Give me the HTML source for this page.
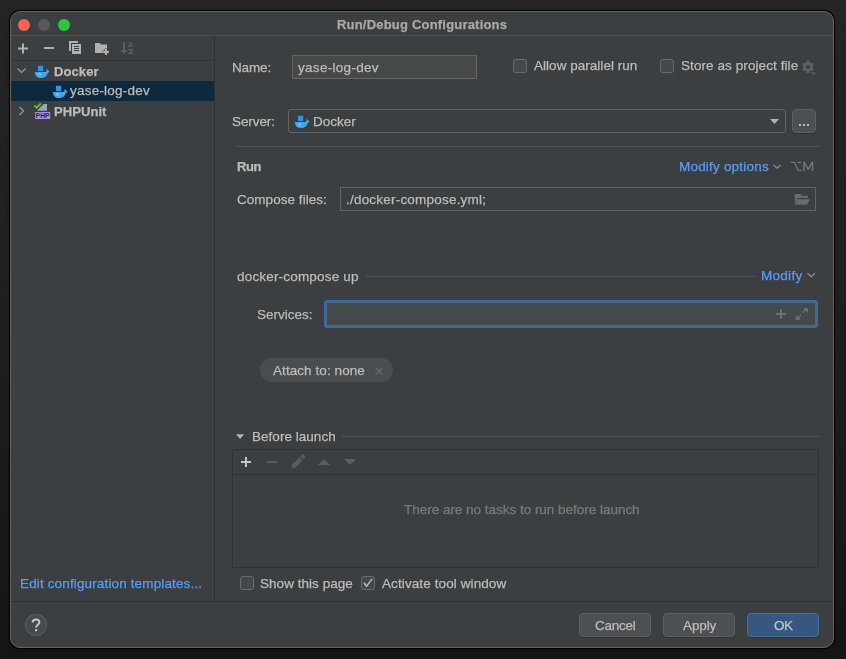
<!DOCTYPE html>
<html><head><meta charset="utf-8">
<style>
*{box-sizing:border-box;margin:0;padding:0}
html,body{width:846px;height:659px;overflow:hidden;font-family:"Liberation Sans",sans-serif;font-size:13px;color:#bbbbbb}
body{background:linear-gradient(#242424,#1f1f1f 50%,#151515);position:relative}
.a{position:absolute}
.t{position:absolute;white-space:nowrap;line-height:16px;height:16px;will-change:transform;-webkit-text-stroke:0.25px currentColor}
#win{position:absolute;left:10px;top:11px;width:824px;height:637px;background:#3c3f41;border-radius:10px;border:1px solid #626466;box-shadow:0 0 0 1px #000,0 2px 4px rgba(0,0,0,.25)}
.inp{position:absolute;background:#45494a;border:1px solid #646464}
.cb{position:absolute;width:14px;height:14px;border:1px solid #6b6b6b;border-radius:3px;background:#43494a}
.btn{position:absolute;height:24px;border:1px solid #5e6060;border-radius:4px;background:#4c5052;box-shadow:0 1px 0 rgba(0,0,0,.18)}
svg{position:absolute;overflow:visible}
</style></head><body>
<div id="win"></div>
<!-- traffic lights -->
<div class="a" style="left:18px;top:19px;width:12px;height:12px;border-radius:50%;background:#fe5f57"></div>
<div class="a" style="left:38px;top:19px;width:12px;height:12px;border-radius:50%;background:#58595b"></div>
<div class="a" style="left:58px;top:19px;width:12px;height:12px;border-radius:50%;background:#2ac741"></div>
<div class="a" style="left:11px;top:35px;width:822px;height:1px;background:#514d4c"></div>

<!-- left panel lines -->
<div class="a" style="left:214px;top:36px;width:1px;height:565px;background:#2f3133"></div>
<div class="a" style="left:11px;top:60px;width:203px;height:1px;background:#323436"></div>
<div class="a" style="left:11px;top:81px;width:203px;height:20px;background:#0d293e"></div>
<div class="a" style="left:11px;top:601px;width:822px;height:1px;background:#2f3133"></div>

<!-- left toolbar icons -->
<svg style="left:0;top:0" width="846" height="659" viewBox="0 0 846 659">
  <g fill="#afb1b3">
    <rect x="18" y="47.5" width="10" height="2"/><rect x="22" y="43.5" width="2" height="10"/>
    <rect x="44" y="47" width="10" height="2"/>
    <path d="M69 41h9v2h-7v8h-2z"/>
    <path d="M72 44h9v10h-9z M74 46v1h5v-1z M74 48v1h5v-1z M74 50v1h5v-1z" fill-rule="evenodd"/>
    <path d="M95 43h4.8l1.5 1.5h5.7v8.5h-12z"/>
    <path d="M105 49h2v2h2v2h-2v2h-2v-2h-2v-2h2z" stroke="#3c3f41" stroke-width="1" paint-order="stroke"/>
  </g>
  <g fill="#5a5d5f">
    <rect x="123" y="42" width="2" height="8.5"/><path d="M120 50h8l-4 4z"/>
    <text x="127.8" y="47" font-size="8.5" font-family="Liberation Sans" font-weight="bold">a</text>
    <path d="M128.5 49h4.6v1.5l-3 2h3v1.5h-4.6v-1.5l3-2h-3z"/>
  </g>
  <!-- tree chevrons -->
  <path d="M17.5 68.5l4 4 4-4" stroke="#9a9a9a" stroke-width="1.2" fill="none"/>
  <path d="M19.5 107l4 4-4 4" stroke="#9a9a9a" stroke-width="1.2" fill="none"/>
  <!-- docker icons -->
  <g transform="translate(34,65)">
    <rect x="3.9" y="0.8" width="5.2" height="5.2" fill="#3592df"/>
    <path d="M0.8 6.9H12.2L12.5 4L15.6 6.4L13.7 8.3C13 11.3 10.5 13.1 7.2 13.1C3.3 13.1 0.8 10.4 0.8 6.9Z" fill="#3fa6f2"/>
    <circle cx="5.5" cy="9.4" r="1" fill="none" stroke="#a6d4f8" stroke-width="0.8"/>
  </g>
  <g transform="translate(52,85)">
    <rect x="3.9" y="0.8" width="5.2" height="5.2" fill="#3592df"/>
    <path d="M0.8 6.9H12.2L12.5 4L15.6 6.4L13.7 8.3C13 11.3 10.5 13.1 7.2 13.1C3.3 13.1 0.8 10.4 0.8 6.9Z" fill="#3fa6f2"/>
    <circle cx="5.5" cy="9.4" r="1" fill="none" stroke="#a6d4f8" stroke-width="0.8"/>
  </g>
  <g transform="translate(294,115)">
    <rect x="3.9" y="0.8" width="5.2" height="5.2" fill="#3592df"/>
    <path d="M0.8 6.9H12.2L12.5 4L15.6 6.4L13.7 8.3C13 11.3 10.5 13.1 7.2 13.1C3.3 13.1 0.8 10.4 0.8 6.9Z" fill="#3fa6f2"/>
    <circle cx="5.5" cy="9.4" r="1" fill="none" stroke="#a6d4f8" stroke-width="0.8"/>
  </g>
  <!-- php icon -->
  <path d="M34.3 105.4l2.6 2.3 3.9-4.3" stroke="#62b543" stroke-width="2" fill="none"/>
  <path d="M37 110.8l6.6-6.8h3.4v6.8z" fill="#9aa7b0"/>
  <rect x="35" y="112" width="15.2" height="7" fill="#a98fe0"/>
  <text x="35.6" y="118.2" font-size="7.2" font-weight="bold" font-family="Liberation Sans" fill="#2e2640" textLength="14" lengthAdjust="spacingAndGlyphs">PHP</text>
</svg>

<!-- right panel -->
<div class="inp" style="left:292px;top:55px;width:185px;height:24px"></div>
<div class="cb" style="left:513px;top:59px"></div>
<div class="cb" style="left:660px;top:59px"></div>
<div class="a" style="left:288px;top:109px;width:498px;height:24px;border:1px solid #646464;border-radius:3px"></div>
<div class="btn" style="left:792px;top:109px;width:24px;height:24px;box-shadow:0 1px 1px rgba(0,0,0,.25)"></div>
<div class="a" style="left:237px;top:146px;width:582px;height:1px;background:#505254"></div>
<div class="inp" style="left:340px;top:187px;width:476px;height:24px;background:#3c3f41"></div>
<div class="a" style="left:366px;top:276px;width:389px;height:1px;background:#505254"></div>
<div class="a" style="left:324px;top:300px;width:494px;height:28px;border:3px solid #3f6a98;border-radius:3px;background:#45494a"></div>
<div class="a" style="left:260px;top:358px;width:133px;height:24px;border-radius:12px;background:#4a4d50"></div>
<div class="a" style="left:342px;top:436px;width:477px;height:1px;background:#505254"></div>
<div class="a" style="left:232px;top:449px;width:587px;height:119px;border:1px solid #2f3133"></div>
<div class="a" style="left:233px;top:474px;width:585px;height:1px;background:#2f3133"></div>
<div class="cb" style="left:240px;top:576px"></div>
<div class="cb" style="left:361px;top:576px"></div>

<!-- bottom -->
<div class="a" style="left:24.9px;top:613.9px;width:22px;height:22.4px;border-radius:50%;background:#474a4c;border:1px solid #5a5d5f"></div>
<div class="btn" style="left:579px;top:613px;width:72px"></div>
<div class="btn" style="left:663px;top:613px;width:72px"></div>
<div class="btn" style="left:747px;top:613px;width:72px;background:#365880;border-color:#4a6f95"></div>

<svg style="left:0;top:0" width="846" height="659" viewBox="0 0 846 659">
  <!-- gear -->
  <g fill="#5c5f61">
    <path fill-rule="evenodd" d="M805.65 62.83 L806.39 62.48 L806.61 60.86 L809.39 60.86 L809.61 62.48 L810.35 62.83 L811.02 63.30 L812.53 62.67 L813.93 65.09 L812.63 66.08 L812.70 66.90 L812.63 67.72 L813.93 68.71 L812.53 71.13 L811.02 70.50 L810.35 70.97 L809.61 71.32 L809.39 72.94 L806.61 72.94 L806.39 71.32 L805.65 70.97 L804.98 70.50 L803.47 71.13 L802.07 68.71 L803.37 67.72 L803.30 66.90 L803.37 66.08 L802.07 65.09 L803.47 62.67 L804.98 63.30Z M808 65a1.9 1.9 0 1 0 0.01 0z"/>
    <path d="M810.5 72.4h5.5l-2.8 2.5z"/>
  </g>
  <!-- combo arrow -->
  <path d="M770 119h9l-4.5 5z" fill="#afb1b3"/>
  <g fill="#bbbbbb"><rect x="799" y="124" width="2" height="2"/><rect x="803" y="124" width="2" height="2"/><rect x="807" y="124" width="2" height="2"/></g>
  <!-- modify chevrons -->
  <path d="M773.5 165l3.5 3.3 3.5-3.3" stroke="#8c8c8c" stroke-width="1.2" fill="none"/>
  <path d="M807.5 273.2l3.7 3.6 3.7-3.6" stroke="#8c8c8c" stroke-width="1.2" fill="none"/>
  <!-- alt M -->
  <path d="M791 162.4H794.5L798.1 170.4H801.5M797.3 162.4H801.5" stroke="#727476" stroke-width="1.2" fill="none"/>
  <path d="M803.9 171V161.8L808.2 169.4L812.5 161.8V171" stroke="#727476" stroke-width="1.5" stroke-linejoin="bevel" fill="none"/>
  <!-- folder -->
  <g fill="#656b6e">
    <path d="M794.8 194h5.7l1.2 1.8h6.3v2.2h-10.2l-1.9 5.2h-1.1z"/>
    <path d="M797.8 199.2h12.1l-2.9 5.6h-12.2z"/>
  </g>
  <!-- services icons -->
  <g fill="#6e7476">
    <rect x="776" y="313" width="10" height="1.8"/><rect x="780" y="309" width="1.8" height="10"/>
    <path d="M803.2 308.3h4.7v4.5z"/><path d="M802.7 312.6l3.2-3.2" stroke="#6e7476" stroke-width="1.2"/>
    <path d="M795.9 315.3v4.5h4.7z"/><path d="M798.3 317.6l2.6-2.6" stroke="#6e7476" stroke-width="1.2"/>
  </g>
  <!-- chip x -->
  <path d="M375.6 367.6l7 7M382.6 367.6l-7 7" stroke="#6f7274" stroke-width="1.1"/>
  <!-- before launch triangle -->
  <path d="M236 434.3h8.2l-4.1 4.6z" fill="#aeb0b2"/>
  <!-- table toolbar -->
  <g fill="#c2c4c6"><rect x="241" y="461" width="10" height="2"/><rect x="245" y="457" width="2" height="10"/></g>
  <g fill="#5b5e60">
    <rect x="267" y="461" width="10" height="2"/>
    <path d="M291.8 464.7L299.5 457.6L302.3 460.4L294.8 468H291.8z"/><path d="M300.2 456.4L302.3 454.6Q302.9 454.2 303.5 454.7L305 456.2Q305.4 456.9 305 457.4L303.3 459.6z"/>
    <path d="M318 465h12l-6-6z"/>
    <path d="M344 459h12l-6 6z"/>
  </g>
  <!-- checkmark -->
  <path d="M364 582.8l2.5 3.4 5.6-7.3" stroke="#b9b9b9" stroke-width="1.5" fill="none"/>
  <!-- help ? -->
  <path d="M32.7 622.5C32.7 620.6 34.2 619.6 36 619.6C37.9 619.6 39.4 620.8 39.4 622.4C39.4 624.4 36.1 624.8 36.1 627.6" stroke="#c6c6c6" stroke-width="2" fill="none"/>
  <rect x="35" y="629.2" width="2.2" height="2" fill="#c6c6c6"/>
</svg>
<div class="t" style="left:336.9px;top:17px;font-size:13px;font-weight:bold;color:#a8a8a8;letter-spacing:0.20px">Run/Debug Configurations</div>
<div class="t" style="left:53.9px;top:64px;font-size:13px;font-weight:bold;color:#bbbbbb;letter-spacing:0.10px">Docker</div>
<div class="t" style="left:69.5px;top:83px;font-size:13.5px;font-weight:normal;color:#bbbbbb;letter-spacing:0.22px">yase-log-dev</div>
<div class="t" style="left:53.9px;top:104px;font-size:13px;font-weight:bold;color:#bbbbbb;letter-spacing:0.07px">PHPUnit</div>
<div class="t" style="left:231.8px;top:60px;font-size:13.5px;font-weight:normal;color:#bbbbbb;letter-spacing:-0.13px">Name:</div>
<div class="t" style="left:298.0px;top:60px;font-size:13.5px;font-weight:normal;color:#bbbbbb;letter-spacing:0.30px">yase-log-dev</div>
<div class="t" style="left:533.5px;top:58px;font-size:13.5px;font-weight:normal;color:#bbbbbb;letter-spacing:0.03px">Allow parallel run</div>
<div class="t" style="left:680.5px;top:58px;font-size:13.5px;font-weight:normal;color:#bbbbbb;letter-spacing:0.08px">Store as project file</div>
<div class="t" style="left:232.4px;top:114px;font-size:13.5px;font-weight:normal;color:#bbbbbb;letter-spacing:-0.09px">Server:</div>
<div class="t" style="left:312.5px;top:114px;font-size:13.5px;font-weight:normal;color:#bbbbbb;letter-spacing:-0.01px">Docker</div>
<div class="t" style="left:237.4px;top:159px;font-size:13px;font-weight:bold;color:#bbbbbb;letter-spacing:-0.36px">Run</div>
<div class="t" style="left:678.8px;top:159px;font-size:13.5px;font-weight:normal;color:#589df6;letter-spacing:0.20px">Modify options</div>
<div class="t" style="left:237.4px;top:192px;font-size:13.5px;font-weight:normal;color:#bbbbbb;letter-spacing:0.04px">Compose files:</div>
<div class="t" style="left:345.8px;top:192px;font-size:13.5px;font-weight:normal;color:#bbbbbb;letter-spacing:0.21px">./docker-compose.yml;</div>
<div class="t" style="left:237.1px;top:269px;font-size:13.5px;font-weight:normal;color:#bbbbbb;letter-spacing:0.18px">docker-compose up</div>
<div class="t" style="left:760.7px;top:268px;font-size:13.5px;font-weight:normal;color:#589df6;letter-spacing:0.28px">Modify</div>
<div class="t" style="left:257.3px;top:307px;font-size:13.5px;font-weight:normal;color:#bbbbbb;letter-spacing:-0.01px">Services:</div>
<div class="t" style="left:272.5px;top:363px;font-size:13.5px;font-weight:normal;color:#bbbbbb;letter-spacing:0.07px">Attach to: none</div>
<div class="t" style="left:252.4px;top:429px;font-size:13.5px;font-weight:normal;color:#bbbbbb;letter-spacing:0.03px">Before launch</div>
<div class="t" style="left:404.2px;top:502px;font-size:13.5px;font-weight:normal;color:#7a7a7a;letter-spacing:-0.02px">There are no tasks to run before launch</div>
<div class="t" style="left:260.2px;top:576px;font-size:13.5px;font-weight:normal;color:#bbbbbb;letter-spacing:0.04px">Show this page</div>
<div class="t" style="left:381.5px;top:576px;font-size:13.5px;font-weight:normal;color:#bbbbbb;letter-spacing:0.10px">Activate tool window</div>
<div class="t" style="left:20.4px;top:576px;font-size:13.5px;font-weight:normal;color:#589df6;letter-spacing:0.14px">Edit configuration templates...</div>
<div class="t" style="left:594.6px;top:618px;font-size:13.5px;font-weight:normal;color:#bbbbbb;letter-spacing:-0.26px">Cancel</div>
<div class="t" style="left:682.7px;top:618px;font-size:13.5px;font-weight:normal;color:#bbbbbb;letter-spacing:-0.10px">Apply</div>
<div class="t" style="left:774.4px;top:618px;font-size:13.5px;font-weight:normal;color:#c4c4c4;letter-spacing:-0.50px">OK</div>
</body></html>
